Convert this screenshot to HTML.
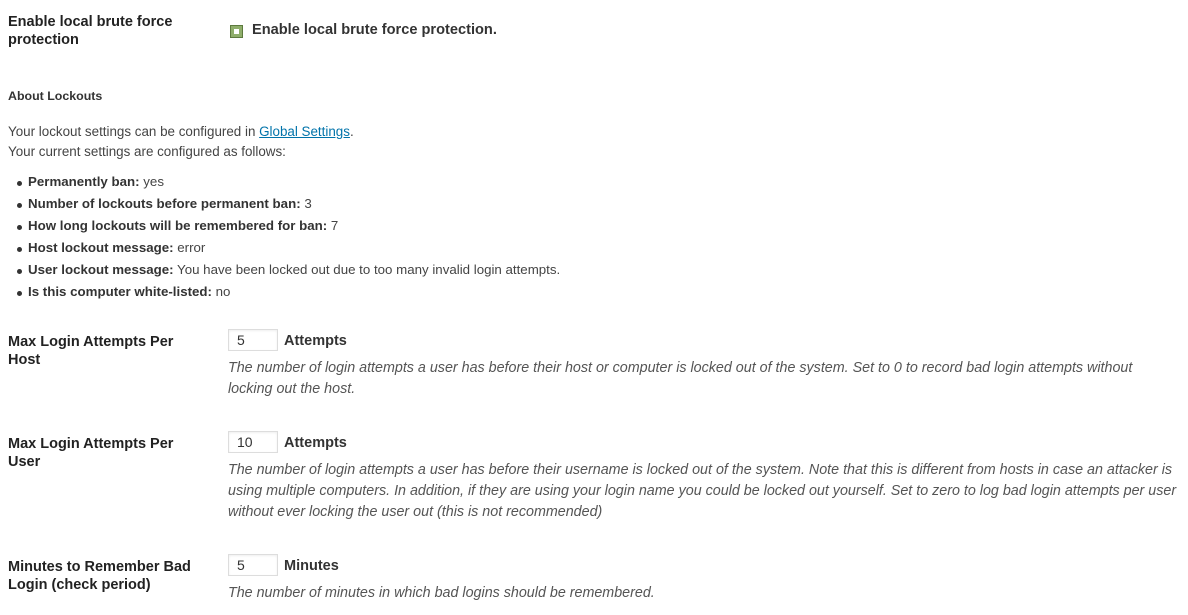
<!DOCTYPE html>
<html><head><style>
body{margin:0;width:1188px;height:615px;background:#fff;font-family:"Liberation Sans",sans-serif;color:#444;position:relative;overflow:hidden}
.a{position:absolute;white-space:nowrap}
.lbl{font-weight:bold;font-size:14.5px;color:#222;line-height:18px}
.t{font-size:13.4px;line-height:20px}
.d{font-style:italic;font-size:14.3px;line-height:21px;color:#555}
.in{position:absolute;height:20px;border:1px solid #ddd;box-shadow:inset 0 1px 2px rgba(0,0,0,.07);font-size:14px;color:#333;line-height:20px;padding-left:8px;box-sizing:content-box;width:40px}
.u{font-weight:bold;font-size:14.5px;color:#333}
.li{position:absolute;left:28px;font-size:13.3px}
.li:before{content:"";position:absolute;left:-11px;top:7px;width:5px;height:5px;border-radius:50%;background:#333}
b{color:#333}
a{color:#0073aa}
</style></head><body>
<div class="a lbl" style="left:8px;top:13px">Enable local brute force<br>protection</div>
<div class="a" style="left:230px;top:25px;width:11px;height:11px;background:#8fae6b;border:1px solid #5d7a3e"><div style="position:absolute;left:3px;top:3px;width:5px;height:5px;background:#fff;"></div></div>
<div class="a" style="left:252px;top:22px;font-size:14.6px;color:#333;font-weight:bold">Enable local brute force protection.</div>
<div class="a" style="left:8px;top:89px;font-size:12.4px;font-weight:bold;color:#333">About Lockouts</div>
<div class="a t" style="left:8px;top:122px">Your lockout settings can be configured in <a href="#">Global Settings</a>.<br>Your current settings are configured as follows:</div>
<div class="li a" style="top:174px"><b>Permanently ban:</b> yes</div>
<div class="li a" style="top:196px"><b>Number of lockouts before permanent ban:</b> 3</div>
<div class="li a" style="top:218px"><b>How long lockouts will be remembered for ban:</b> 7</div>
<div class="li a" style="top:240px"><b>Host lockout message:</b> error</div>
<div class="li a" style="top:262px"><b>User lockout message:</b> You have been locked out due to too many invalid login attempts.</div>
<div class="li a" style="top:284px"><b>Is this computer white-listed:</b> no</div>

<div class="a lbl" style="left:8px;top:333px">Max Login Attempts Per<br>Host</div>
<div class="in" style="left:228px;top:329px">5</div>
<div class="a u" style="left:284px;top:333px">Attempts</div>
<div class="a d" style="left:228px;top:358px">The number of login attempts a user has before their host or computer is locked out of the system. Set to 0 to record bad login attempts without<br>locking out the host.</div>

<div class="a lbl" style="left:8px;top:435px">Max Login Attempts Per<br>User</div>
<div class="in" style="left:228px;top:431px">10</div>
<div class="a u" style="left:284px;top:435px">Attempts</div>
<div class="a d" style="left:228px;top:460px">The number of login attempts a user has before their username is locked out of the system. Note that this is different from hosts in case an attacker is<br>using multiple computers. In addition, if they are using your login name you could be locked out yourself. Set to zero to log bad login attempts per user<br>without ever locking the user out (this is not recommended)</div>

<div class="a lbl" style="left:8px;top:558px">Minutes to Remember Bad<br>Login (check period)</div>
<div class="in" style="left:228px;top:554px">5</div>
<div class="a u" style="left:284px;top:558px">Minutes</div>
<div class="a d" style="left:228px;top:583px">The number of minutes in which bad logins should be remembered.</div>
</body></html>
